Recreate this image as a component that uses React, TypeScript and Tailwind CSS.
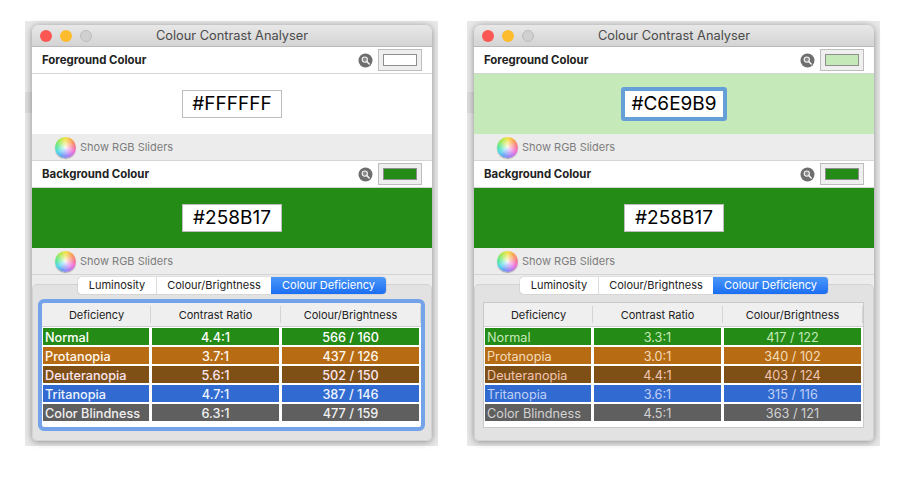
const sans = 'font-["Inter","Liberation_Sans",sans-serif]';

interface Row {
  name: string;
  bg: string;
  ratio: string;
  brightness: string;
  text: string;
}

const whiteRows: Row[] = [
  { name: 'Normal', bg: 'bg-[#258b17]', text: 'text-white', ratio: '4.4:1', brightness: '566 / 160' },
  { name: 'Protanopia', bg: 'bg-[#b76c14]', text: 'text-[#fff8f0]', ratio: '3.7:1', brightness: '437 / 126' },
  { name: 'Deuteranopia', bg: 'bg-[#7f5015]', text: 'text-[#fbe6f2]', ratio: '5.6:1', brightness: '502 / 150' },
  { name: 'Tritanopia', bg: 'bg-[#316bd1]', text: 'text-[#eef4ff]', ratio: '4.7:1', brightness: '387 / 146' },
  { name: 'Color Blindness', bg: 'bg-[#5f5f5f]', text: 'text-[#f0f0f0]', ratio: '6.3:1', brightness: '477 / 159' },
];

const greenRows: Row[] = [
  { name: 'Normal', bg: 'bg-[#258b17]', text: 'text-[#c6e9b9]', ratio: '3.3:1', brightness: '417 / 122' },
  { name: 'Protanopia', bg: 'bg-[#b76c14]', text: 'text-[#f3dcbc]', ratio: '3.0:1', brightness: '340 / 102' },
  { name: 'Deuteranopia', bg: 'bg-[#7f5015]', text: 'text-[#f2c6b4]', ratio: '4.4:1', brightness: '403 / 124' },
  { name: 'Tritanopia', bg: 'bg-[#316bd1]', text: 'text-[#c2d0f5]', ratio: '3.6:1', brightness: '315 / 116' },
  { name: 'Color Blindness', bg: 'bg-[#5f5f5f]', text: 'text-[#d2d2d2]', ratio: '4.5:1', brightness: '363 / 121' },
];

function Magnifier() {
  return (
    <svg width="15" height="15" viewBox="0 0 15 15">
      <circle cx="7.5" cy="7.5" r="7" fill="#6e6e6e" />
      <circle cx="6.8" cy="6.6" r="2.6" fill="#8c8c8c" stroke="#f4f4f4" strokeWidth="1.1" />
      <path d="M8.8 8.6 L11.2 11" stroke="#f4f4f4" strokeWidth="1.5" strokeLinecap="round" />
    </svg>
  );
}

function ColourHeader({ title, colour }: { title: string; colour: string }) {
  return (
    <div className="flex h-[27px] items-center justify-between border-b border-[#d4d4d4] bg-white pl-[10px] pr-[10px]">
      <span className="pt-[2px] text-[11.4px] font-bold text-[#222]">{title}</span>
      <div className="flex items-center gap-[5px]">
        <Magnifier />
        <div className="flex h-[22px] w-[44px] items-center justify-center border border-[#bdbdbd] bg-[#efefef]">
          <div className={`h-[12px] w-[34px] border border-[#8e8e8e] ${colour}`} />
        </div>
      </div>
    </div>
  );
}

function ColourSwatch({ hex, bg, focused }: { hex: string; bg: string; focused?: boolean }) {
  return (
    <div className={`flex h-[60px] items-center justify-center ${bg}`}>
      {focused ? (
        <div className="flex h-[34px] w-[106px] items-center justify-center rounded-[3px] border-[4px] border-[#649fd8] bg-white text-[19px] text-black">
          {hex}
        </div>
      ) : (
        <div className="flex h-[28px] w-[100px] items-center justify-center border border-[#bdbdbd] bg-white text-[19px] text-black">
          {hex}
        </div>
      )}
    </div>
  );
}

function SliderToggle() {
  return (
    <div className="flex h-[27px] items-center gap-[4px] border-b border-[#d4d4d4] bg-[#ececec] pl-[23px]">
      <div className="h-[21px] w-[21px] overflow-hidden rounded-full bg-[conic-gradient(#f2e34a,#f9a54f,#f77a8a,#ee6fdc,#a97cf2,#6a9cf5,#52d8ea,#5fe68f,#a8e84f,#f2e34a)] shadow-[0_1px_1px_rgba(0,0,0,0.3)]">
        <div className="h-full w-full rounded-full bg-[radial-gradient(circle,rgba(255,255,255,0.9)_0%,rgba(255,255,255,0)_62%)]" />
      </div>
      <span className="text-[11px] text-[#7d7d7d]">Show RGB Sliders</span>
    </div>
  );
}

function Tabs() {
  return (
    <div className="relative z-10 ml-[46px] flex h-[17px] w-[308px] rounded-[4px] text-[11px] text-[#222] shadow-[0_0_1px_rgba(0,0,0,0.5)]">
      <div className="flex w-[79px] items-center justify-center rounded-l-[4px] border-r border-[#dcdcdc] bg-white">Luminosity</div>
      <div className="flex w-[114px] items-center justify-center bg-white">Colour/Brightness</div>
      <div className="flex w-[115px] items-center justify-center rounded-r-[4px] bg-gradient-to-b from-[#4a97f9] to-[#1a6ef2] text-white">
        Colour Deficiency
      </div>
    </div>
  );
}

function DeficiencyTable({ rows, focused }: { rows: Row[]; focused?: boolean }) {
  return (
    <div
      className={`ml-[9px] mt-[18px] h-[124px] w-[379px] bg-white ${
        focused ? 'rounded-[2px] outline-4 outline-[#74a3ea]' : 'outline outline-[#c9c9c9]'
      }`}
    >
      <div className="flex h-[24px] items-center border-b border-[#d0d0d0] bg-[#efefef] pl-px text-[11px] text-[#222]">
        <div className="flex h-[17px] w-[108px] items-center justify-center border-r border-[#d4d4d4] pt-px">Deficiency</div>
        <div className="flex h-[17px] w-[130px] items-center justify-center border-r border-[#d4d4d4] pt-px">Contrast Ratio</div>
        <div className="flex h-[17px] w-[140px] items-center justify-center border-r border-[#d4d4d4] pt-px">Colour/Brightness</div>
      </div>
      <div className="mt-px grid grid-cols-[106px_127px_137px] gap-x-[3px] gap-y-[2px] pl-px text-[12.7px]">
        {rows.map((row) => (
          <div key={row.name} className={`contents ${row.text} ${focused ? 'font-medium' : ''}`}>
            <div className={`flex h-[17px] items-center pl-[2px] pt-[2px] ${row.bg}`}>{row.name}</div>
            <div className={`flex h-[17px] items-center justify-center pt-[2px] ${row.bg}`}>{row.ratio}</div>
            <div className={`flex h-[17px] items-center justify-center pt-[2px] ${row.bg}`}>{row.brightness}</div>
          </div>
        ))}
      </div>
    </div>
  );
}

function AnalyserWindow({
  hex,
  swatch,
  fgBg,
  rows,
  tableFocused,
}: {
  hex: string;
  swatch: string;
  fgBg: string;
  rows: Row[];
  tableFocused?: boolean;
}) {
  return (
    <div className="relative h-[425px] w-[413px] bg-[#e8e8e8] pl-[7px] pt-[4px]">
      {/* 뒤쪽 창 흔적 */}
      <div className="absolute left-0 top-[71px] h-[21px] w-[7px] bg-[#dcdcdc]" />
      <div className="relative h-[416px] w-[400px] overflow-hidden rounded-t-[7px] rounded-b-[5px] bg-[#ececec] shadow-[0_1px_7px_rgba(0,0,0,0.4)]">
        {/* 타이틀바 */}
        <div className="relative flex h-[22px] items-center justify-center border-b border-[#b9b9b9] bg-gradient-to-b from-[#e8e8e8] to-[#d4d4d4] pt-px text-[12.8px] text-[#4a4a4a]">
          <div className="absolute left-[8px] top-[5px] flex gap-[8px]">
            <div className="h-[12px] w-[12px] rounded-full bg-[#fc5753]" />
            <div className="h-[12px] w-[12px] rounded-full bg-[#fdbc2e]" />
            <div className="h-[12px] w-[12px] rounded-full border border-[#bcbcbc] bg-[#d0d0d0]" />
          </div>
          Colour Contrast Analyser
        </div>
        <ColourHeader title="Foreground Colour" colour={swatch} />
        <ColourSwatch hex={hex} bg={fgBg} focused={!tableFocused} />
        <SliderToggle />
        <ColourHeader title="Background Colour" colour="bg-[#258b17]" />
        <ColourSwatch hex="#258B17" bg="bg-[#258b17]" />
        <SliderToggle />
        <div className="pt-[2px]">
          <Tabs />
          <div className="-mt-[10px] h-[157px] rounded-[5px] border border-[#d2d2d2] bg-[#e2e2e2]">
            <DeficiencyTable rows={rows} focused={tableFocused} />
          </div>
        </div>
      </div>
    </div>
  );
}

export default function App() {
  return (
    <div className={`flex h-[483px] w-[906px] gap-[29px] bg-white pl-[25px] pt-[21px] ${sans}`}>
      <AnalyserWindow hex="#FFFFFF" swatch="bg-white" fgBg="bg-white" rows={whiteRows} tableFocused />
      <AnalyserWindow hex="#C6E9B9" swatch="bg-[#c6e9b9]" fgBg="bg-[#c6e9b9]" rows={greenRows} />
    </div>
  );
}
